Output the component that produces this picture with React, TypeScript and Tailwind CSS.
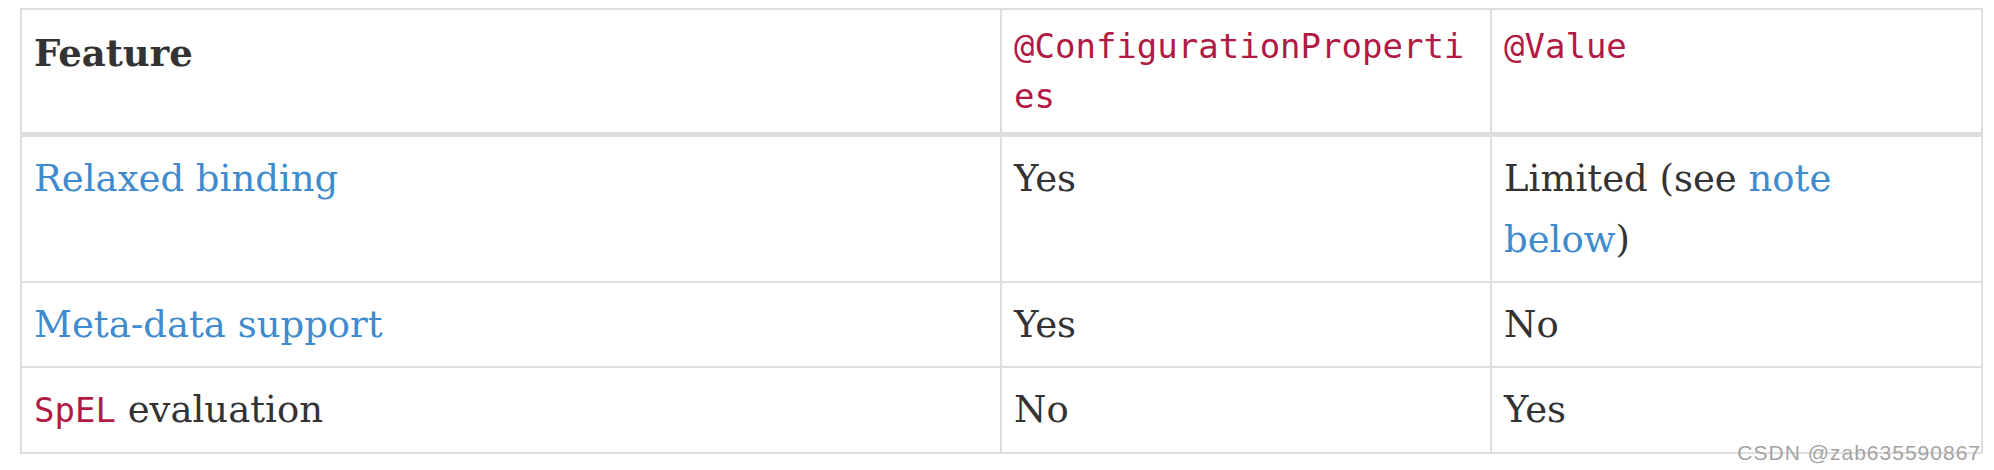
import React from "react";

const serif = "font-['DejaVu_Serif','Liberation_Serif',serif]";
const mono = "font-['DejaVu_Sans_Mono','Liberation_Mono',monospace]";

function Code({ children }: { children: React.ReactNode }) {
  return (
    <code className={`${mono} text-[34px] leading-[50px] text-[#b01a44] break-all`}>
      {children}
    </code>
  );
}

function Link({ children }: { children: React.ReactNode }) {
  return <a className="text-[#3f8bcd] no-underline">{children}</a>;
}

export default function App() {
  const cell =
    "border-2 border-[#dedede] px-[12px] pt-[11px] pb-[11px] align-top text-left";
  return (
    <div className="relative w-[1994px] h-[470px] bg-white overflow-hidden">
      <div className="pt-[8px] pl-[20px]">
        <table
          className={`w-[1961px] table-fixed border-collapse border-2 border-[#dedede] ${serif} text-[37px] leading-[61px] text-[#333333]`}
        >
          <colgroup>
            <col className="w-[980px]" />
            <col className="w-[490px]" />
            <col className="w-[491px]" />
          </colgroup>
          <thead>
            <tr>
              <th className={`${cell} border-b-[5px] font-bold pt-[13px]`}>Feature</th>
              <th className={`${cell} border-b-[5px] font-normal leading-[50px]`}>
                <Code>@ConfigurationProperties</Code>
              </th>
              <th className={`${cell} border-b-[5px] font-normal leading-[50px]`}>
                <Code>@Value</Code>
              </th>
            </tr>
          </thead>
          <tbody>
            <tr>
              <td className={cell}>
                <Link>Relaxed binding</Link>
              </td>
              <td className={cell}>Yes</td>
              <td className={cell}>
                <div className="max-w-[420px]">
                  Limited (see <Link>note below</Link>)
                </div>
              </td>
            </tr>
            <tr>
              <td className={cell}>
                <Link>Meta-data support</Link>
              </td>
              <td className={cell}>Yes</td>
              <td className={cell}>No</td>
            </tr>
            <tr>
              <td className={cell}>
                <code className={`${mono} text-[34px] text-[#b01a44]`}>SpEL</code> evaluation
              </td>
              <td className={cell}>No</td>
              <td className={cell}>Yes</td>
            </tr>
          </tbody>
        </table>
      </div>
      <div className="absolute right-[13px] top-[442px] font-['Liberation_Sans',Arial,sans-serif] text-[21px] leading-[22px] tracking-[1px] text-[#a3a3a3]">
        CSDN @zab635590867
      </div>
    </div>
  );
}
